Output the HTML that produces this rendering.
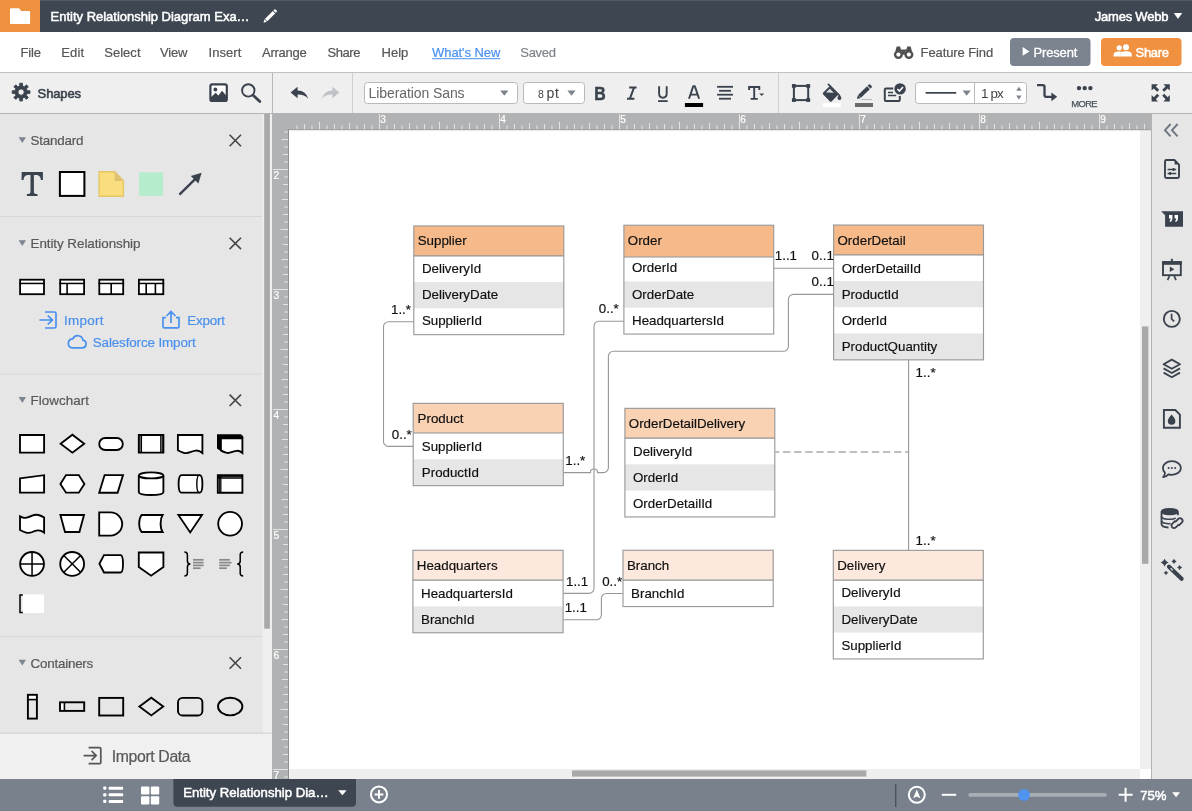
<!DOCTYPE html>
<html lang="en"><head><meta charset="utf-8"><title>Entity Relationship Diagram Example: Lucidchart</title>
<style>
html,body{margin:0;padding:0;}
body{width:1192px;height:811px;overflow:hidden;position:relative;background:#fff;
 font-family:"Liberation Sans",sans-serif;}
.r{position:absolute;overflow:hidden;}
.r svg{display:block;position:absolute;left:0;top:0;}
.r{will-change:transform;}
svg text{font-family:"Liberation Sans",sans-serif;}
</style></head>
<body>
<div id="canvas" class="r" style="left:272px;top:114px;width:880px;height:665px;"><svg width="880" height="665" viewBox="272 114 880 665"><rect x="272" y="114" width="880" height="665" fill="#fff"/><rect x="1140" y="130" width="11" height="639" fill="#efefef"/><rect x="289" y="769" width="851" height="10" fill="#efefef"/><rect x="1142" y="326.4" width="6.4" height="237.4" fill="#a9a9a9"/><rect x="572" y="770.4" width="294.4" height="6.2" fill="#a9a9a9"/><rect x="272" y="114" width="879" height="15.2" fill="#b1b2b4"/><rect x="272" y="114" width="16" height="665" fill="#b1b2b4"/><rect x="288" y="129.2" width="863" height="1" fill="#8e8f91"/><rect x="288" y="129.2" width="1" height="649.8" fill="#8e8f91"/><path d="M297.00 125.40V129.2M304.50 124.20V129.2M312.00 125.40V129.2M319.50 121.80V129.2M327.00 125.40V129.2M334.50 124.20V129.2M342.00 125.40V129.2M349.50 123.00V129.2M357.00 125.40V129.2M364.50 124.20V129.2M372.00 125.40V129.2M379.50 114.00V129.2M387.00 125.40V129.2M394.50 124.20V129.2M402.00 125.40V129.2M409.50 123.00V129.2M417.00 125.40V129.2M424.50 124.20V129.2M432.00 125.40V129.2M439.50 121.80V129.2M447.00 125.40V129.2M454.50 124.20V129.2M462.00 125.40V129.2M469.50 123.00V129.2M477.00 125.40V129.2M484.50 124.20V129.2M492.00 125.40V129.2M499.50 114.00V129.2M507.00 125.40V129.2M514.50 124.20V129.2M522.00 125.40V129.2M529.50 123.00V129.2M537.00 125.40V129.2M544.50 124.20V129.2M552.00 125.40V129.2M559.50 121.80V129.2M567.00 125.40V129.2M574.50 124.20V129.2M582.00 125.40V129.2M589.50 123.00V129.2M597.00 125.40V129.2M604.50 124.20V129.2M612.00 125.40V129.2M619.50 114.00V129.2M627.00 125.40V129.2M634.50 124.20V129.2M642.00 125.40V129.2M649.50 123.00V129.2M657.00 125.40V129.2M664.50 124.20V129.2M672.00 125.40V129.2M679.50 121.80V129.2M687.00 125.40V129.2M694.50 124.20V129.2M702.00 125.40V129.2M709.50 123.00V129.2M717.00 125.40V129.2M724.50 124.20V129.2M732.00 125.40V129.2M739.50 114.00V129.2M747.00 125.40V129.2M754.50 124.20V129.2M762.00 125.40V129.2M769.50 123.00V129.2M777.00 125.40V129.2M784.50 124.20V129.2M792.00 125.40V129.2M799.50 121.80V129.2M807.00 125.40V129.2M814.50 124.20V129.2M822.00 125.40V129.2M829.50 123.00V129.2M837.00 125.40V129.2M844.50 124.20V129.2M852.00 125.40V129.2M859.50 114.00V129.2M867.00 125.40V129.2M874.50 124.20V129.2M882.00 125.40V129.2M889.50 123.00V129.2M897.00 125.40V129.2M904.50 124.20V129.2M912.00 125.40V129.2M919.50 121.80V129.2M927.00 125.40V129.2M934.50 124.20V129.2M942.00 125.40V129.2M949.50 123.00V129.2M957.00 125.40V129.2M964.50 124.20V129.2M972.00 125.40V129.2M979.50 114.00V129.2M987.00 125.40V129.2M994.50 124.20V129.2M1002.00 125.40V129.2M1009.50 123.00V129.2M1017.00 125.40V129.2M1024.50 124.20V129.2M1032.00 125.40V129.2M1039.50 121.80V129.2M1047.00 125.40V129.2M1054.50 124.20V129.2M1062.00 125.40V129.2M1069.50 123.00V129.2M1077.00 125.40V129.2M1084.50 124.20V129.2M1092.00 125.40V129.2M1099.50 114.00V129.2M1107.00 125.40V129.2M1114.50 124.20V129.2M1122.00 125.40V129.2M1129.50 123.00V129.2M1137.00 125.40V129.2M1144.50 124.20V129.2" stroke="#e4e4e4" stroke-width="1" fill="none"/><text x="380.3" y="122.9" font-size="10.2" fill="#fff" stroke="#fff" stroke-width="0.2">3</text><text x="500.3" y="122.9" font-size="10.2" fill="#fff" stroke="#fff" stroke-width="0.2">4</text><text x="620.3" y="122.9" font-size="10.2" fill="#fff" stroke="#fff" stroke-width="0.2">5</text><text x="740.3" y="122.9" font-size="10.2" fill="#fff" stroke="#fff" stroke-width="0.2">6</text><text x="860.3" y="122.9" font-size="10.2" fill="#fff" stroke="#fff" stroke-width="0.2">7</text><text x="980.3" y="122.9" font-size="10.2" fill="#fff" stroke="#fff" stroke-width="0.2">8</text><text x="1100.3" y="122.9" font-size="10.2" fill="#fff" stroke="#fff" stroke-width="0.2">9</text><path d="M284.20 132.00H288M281.80 139.50H288M284.20 147.00H288M283.00 154.50H288M284.20 162.00H288M273.00 169.50H288M284.20 177.00H288M283.00 184.50H288M284.20 192.00H288M281.80 199.50H288M284.20 207.00H288M283.00 214.50H288M284.20 222.00H288M280.60 229.50H288M284.20 237.00H288M283.00 244.50H288M284.20 252.00H288M281.80 259.50H288M284.20 267.00H288M283.00 274.50H288M284.20 282.00H288M273.00 289.50H288M284.20 297.00H288M283.00 304.50H288M284.20 312.00H288M281.80 319.50H288M284.20 327.00H288M283.00 334.50H288M284.20 342.00H288M280.60 349.50H288M284.20 357.00H288M283.00 364.50H288M284.20 372.00H288M281.80 379.50H288M284.20 387.00H288M283.00 394.50H288M284.20 402.00H288M273.00 409.50H288M284.20 417.00H288M283.00 424.50H288M284.20 432.00H288M281.80 439.50H288M284.20 447.00H288M283.00 454.50H288M284.20 462.00H288M280.60 469.50H288M284.20 477.00H288M283.00 484.50H288M284.20 492.00H288M281.80 499.50H288M284.20 507.00H288M283.00 514.50H288M284.20 522.00H288M273.00 529.50H288M284.20 537.00H288M283.00 544.50H288M284.20 552.00H288M281.80 559.50H288M284.20 567.00H288M283.00 574.50H288M284.20 582.00H288M280.60 589.50H288M284.20 597.00H288M283.00 604.50H288M284.20 612.00H288M281.80 619.50H288M284.20 627.00H288M283.00 634.50H288M284.20 642.00H288M273.00 649.50H288M284.20 657.00H288M283.00 664.50H288M284.20 672.00H288M281.80 679.50H288M284.20 687.00H288M283.00 694.50H288M284.20 702.00H288M280.60 709.50H288M284.20 717.00H288M283.00 724.50H288M284.20 732.00H288M281.80 739.50H288M284.20 747.00H288M283.00 754.50H288M284.20 762.00H288M273.00 769.50H288M284.20 777.00H288" stroke="#e4e4e4" stroke-width="1" fill="none"/><text x="273.4" y="178.9" font-size="10.2" fill="#fff" stroke="#fff" stroke-width="0.2">2</text><text x="273.4" y="298.9" font-size="10.2" fill="#fff" stroke="#fff" stroke-width="0.2">3</text><text x="273.4" y="418.9" font-size="10.2" fill="#fff" stroke="#fff" stroke-width="0.2">4</text><text x="273.4" y="538.9" font-size="10.2" fill="#fff" stroke="#fff" stroke-width="0.2">5</text><text x="273.4" y="658.9" font-size="10.2" fill="#fff" stroke="#fff" stroke-width="0.2">6</text><text x="273.4" y="778.9" font-size="10.2" fill="#fff" stroke="#fff" stroke-width="0.2">7</text><path d="M414.3 321.7 L388.5 321.7 A5 5 0 0 0 383.5 326.7 L383.5 441.4 A5 5 0 0 0 388.5 446.4 L413.7 446.4" fill="none" stroke="#979797" stroke-width="1.1" /><path d="M624.4 321.2 L599 321.2 A5 5 0 0 0 594 326.2 L594 588.4 A5 5 0 0 1 589 593.4 L563.4 593.4" fill="none" stroke="#979797" stroke-width="1.1" /><path d="M774 268.2 H834.1" fill="none" stroke="#979797" stroke-width="1.1" /><path d="M834.1 294.4 L793.4 294.4 A5 5 0 0 0 788.4 299.4 L788.4 346.3 A5 5 0 0 1 783.4 351.3 L613.4 351.3 A5 5 0 0 0 608.4 356.3 L608.4 467.6 A5 5 0 0 1 603.4 472.6 L597.6 472.6 A3.6 3.6 0 0 0 590.4 472.6 L563.6 472.6" fill="none" stroke="#979797" stroke-width="1.1" /><path d="M908.6 360 V550.7" fill="none" stroke="#979797" stroke-width="1.1" /><path d="M775.4 451.9 H908.6" fill="none" stroke="#ababab" stroke-width="1.5" stroke-dasharray="7.4 3.7" stroke-dashoffset="3.5"/><path d="M563.4 619.8 L596.4 619.8 A5 5 0 0 0 601.4 614.8 L601.4 598.5 A5 5 0 0 1 606.4 593.5 L623.5 593.5" fill="none" stroke="#979797" stroke-width="1.1" /><rect x="413.8" y="225.95" width="150.0" height="108.70" fill="#fff"/><rect x="413.8" y="225.95" width="150.0" height="29.9" fill="#f5b98a"/><rect x="413.8" y="282.05" width="150.0" height="26.2" fill="#e6e6e6"/><rect x="413.8" y="225.95" width="150.0" height="108.70" fill="none" stroke="#9a9a9a" stroke-width="1.15"/><path d="M413.8 255.85h150.0" stroke="#939393" stroke-width="1.1"/><text x="417.7" y="245.3" font-size="13.33" fill="#111" stroke="#111" stroke-width="0.18">Supplier</text><text x="421.9" y="272.8" font-size="13.33" fill="#111" stroke="#111" stroke-width="0.18">DeliveryId</text><text x="421.9" y="299.0" font-size="13.33" fill="#111" stroke="#111" stroke-width="0.18">DeliveryDate</text><text x="421.9" y="325.2" font-size="13.33" fill="#111" stroke="#111" stroke-width="0.18">SupplierId</text><rect x="623.9" y="225.25" width="149.79999999999998" height="108.80" fill="#fff"/><rect x="623.9" y="225.25" width="149.79999999999998" height="31.7" fill="#f5b98a"/><rect x="623.9" y="281.45" width="149.79999999999998" height="26.2" fill="#e6e6e6"/><rect x="623.9" y="225.25" width="149.79999999999998" height="108.80" fill="none" stroke="#9a9a9a" stroke-width="1.15"/><path d="M623.9 256.95h149.79999999999998" stroke="#939393" stroke-width="1.1"/><text x="627.8" y="245.3" font-size="13.33" fill="#111" stroke="#111" stroke-width="0.18">Order</text><text x="632.0" y="272.4" font-size="13.33" fill="#111" stroke="#111" stroke-width="0.18">OrderId</text><text x="632.0" y="298.6" font-size="13.33" fill="#111" stroke="#111" stroke-width="0.18">OrderDate</text><text x="632.0" y="324.8" font-size="13.33" fill="#111" stroke="#111" stroke-width="0.18">HeadquartersId</text><rect x="833.6" y="225.05" width="149.89999999999998" height="134.80" fill="#fff"/><rect x="833.6" y="225.05" width="149.89999999999998" height="29.8" fill="#f5b98a"/><rect x="833.6" y="281.05" width="149.89999999999998" height="26.2" fill="#e6e6e6"/><rect x="833.6" y="333.45" width="149.89999999999998" height="26.2" fill="#e6e6e6"/><rect x="833.6" y="225.05" width="149.89999999999998" height="134.80" fill="none" stroke="#9a9a9a" stroke-width="1.15"/><path d="M833.6 254.85h149.89999999999998" stroke="#939393" stroke-width="1.1"/><text x="837.5" y="244.6" font-size="13.33" fill="#111" stroke="#111" stroke-width="0.18">OrderDetail</text><text x="841.7" y="272.5" font-size="13.33" fill="#111" stroke="#111" stroke-width="0.18">OrderDetailId</text><text x="841.7" y="298.7" font-size="13.33" fill="#111" stroke="#111" stroke-width="0.18">ProductId</text><text x="841.7" y="324.9" font-size="13.33" fill="#111" stroke="#111" stroke-width="0.18">OrderId</text><text x="841.7" y="351.1" font-size="13.33" fill="#111" stroke="#111" stroke-width="0.18">ProductQuantity</text><rect x="413.2" y="403.35" width="150.1" height="82.30" fill="#fff"/><rect x="413.2" y="403.35" width="150.1" height="29.7" fill="#f9d1b3"/><rect x="413.2" y="459.25" width="150.1" height="26.2" fill="#e6e6e6"/><rect x="413.2" y="403.35" width="150.1" height="82.30" fill="none" stroke="#9a9a9a" stroke-width="1.15"/><path d="M413.2 433.05h150.1" stroke="#939393" stroke-width="1.1"/><text x="417.6" y="422.8" font-size="13.33" fill="#111" stroke="#111" stroke-width="0.18">Product</text><text x="421.8" y="450.5" font-size="13.33" fill="#111" stroke="#111" stroke-width="0.18">SupplierId</text><text x="421.8" y="476.7" font-size="13.33" fill="#111" stroke="#111" stroke-width="0.18">ProductId</text><rect x="624.9" y="408.35" width="149.89999999999998" height="108.60" fill="#fff"/><rect x="624.9" y="408.35" width="149.89999999999998" height="29.8" fill="#f9d1b3"/><rect x="624.9" y="464.35" width="149.89999999999998" height="26.2" fill="#e6e6e6"/><rect x="624.9" y="408.35" width="149.89999999999998" height="108.60" fill="none" stroke="#9a9a9a" stroke-width="1.15"/><path d="M624.9 438.15h149.89999999999998" stroke="#939393" stroke-width="1.1"/><text x="628.8" y="427.8" font-size="13.33" fill="#111" stroke="#111" stroke-width="0.18">OrderDetailDelivery</text><text x="633.0" y="455.7" font-size="13.33" fill="#111" stroke="#111" stroke-width="0.18">DeliveryId</text><text x="633.0" y="481.9" font-size="13.33" fill="#111" stroke="#111" stroke-width="0.18">OrderId</text><text x="633.0" y="508.1" font-size="13.33" fill="#111" stroke="#111" stroke-width="0.18">OrderDetailId</text><rect x="412.9" y="550.25" width="150.2" height="82.50" fill="#fff"/><rect x="412.9" y="550.25" width="150.2" height="29.9" fill="#fce8dc"/><rect x="412.9" y="606.35" width="150.2" height="26.2" fill="#e6e6e6"/><rect x="412.9" y="550.25" width="150.2" height="82.50" fill="none" stroke="#9a9a9a" stroke-width="1.15"/><path d="M412.9 580.15h150.2" stroke="#939393" stroke-width="1.1"/><text x="416.8" y="570.3" font-size="13.33" fill="#111" stroke="#111" stroke-width="0.18">Headquarters</text><text x="421.0" y="597.6" font-size="13.33" fill="#111" stroke="#111" stroke-width="0.18">HeadquartersId</text><text x="421.0" y="623.8" font-size="13.33" fill="#111" stroke="#111" stroke-width="0.18">BranchId</text><rect x="623.0" y="550.25" width="150.2" height="56.30" fill="#fff"/><rect x="623.0" y="550.25" width="150.2" height="29.9" fill="#fce8dc"/><rect x="623.0" y="550.25" width="150.2" height="56.30" fill="none" stroke="#9a9a9a" stroke-width="1.15"/><path d="M623.0 580.15h150.2" stroke="#939393" stroke-width="1.1"/><text x="626.9" y="570.3" font-size="13.33" fill="#111" stroke="#111" stroke-width="0.18">Branch</text><text x="631.1" y="597.6" font-size="13.33" fill="#111" stroke="#111" stroke-width="0.18">BranchId</text><rect x="833.3" y="550.35" width="150.0" height="108.60" fill="#fff"/><rect x="833.3" y="550.35" width="150.0" height="29.8" fill="#fce8dc"/><rect x="833.3" y="606.35" width="150.0" height="26.2" fill="#e6e6e6"/><rect x="833.3" y="550.35" width="150.0" height="108.60" fill="none" stroke="#9a9a9a" stroke-width="1.15"/><path d="M833.3 580.15h150.0" stroke="#939393" stroke-width="1.1"/><text x="837.2" y="569.7" font-size="13.33" fill="#111" stroke="#111" stroke-width="0.18">Delivery</text><text x="841.4" y="597.3" font-size="13.33" fill="#111" stroke="#111" stroke-width="0.18">DeliveryId</text><text x="841.4" y="623.5" font-size="13.33" fill="#111" stroke="#111" stroke-width="0.18">DeliveryDate</text><text x="841.4" y="649.7" font-size="13.33" fill="#111" stroke="#111" stroke-width="0.18">SupplierId</text><text x="391" y="313.7" font-size="13.33" fill="#111" stroke="#111" stroke-width="0.18">1..*</text><text x="391.8" y="438.6" font-size="13.33" fill="#111" stroke="#111" stroke-width="0.18">0..*</text><text x="598.8" y="313.3" font-size="13.33" fill="#111" stroke="#111" stroke-width="0.18">0..*</text><text x="565.3" y="464.9" font-size="13.33" fill="#111" stroke="#111" stroke-width="0.18">1..*</text><text x="774.8" y="260" font-size="13.33" fill="#111" stroke="#111" stroke-width="0.18">1..1</text><text x="811.6" y="260" font-size="13.33" fill="#111" stroke="#111" stroke-width="0.18">0..1</text><text x="811.6" y="286.2" font-size="13.33" fill="#111" stroke="#111" stroke-width="0.18">0..1</text><text x="915.6" y="376.8" font-size="13.33" fill="#111" stroke="#111" stroke-width="0.18">1..*</text><text x="915.6" y="545" font-size="13.33" fill="#111" stroke="#111" stroke-width="0.18">1..*</text><text x="566" y="585.6" font-size="13.33" fill="#111" stroke="#111" stroke-width="0.18">1..1</text><text x="564.7" y="611.6" font-size="13.33" fill="#111" stroke="#111" stroke-width="0.18">1..1</text><text x="602.2" y="585.6" font-size="13.33" fill="#111" stroke="#111" stroke-width="0.18">0..*</text></svg></div>
<div id="left" class="r" style="left:0px;top:114px;width:272px;height:665px;"><svg width="272" height="665" viewBox="0 114 272 665"><rect x="0" y="114" width="272" height="665" fill="#e6e6e6"/><rect x="262.6" y="114" width="9.4" height="665" fill="#efefef"/><rect x="262" y="114" width="1" height="665" fill="#eaeaea"/><rect x="264.2" y="114" width="5.7" height="514.7" fill="#a9a9a9"/><rect x="0" y="216" width="262" height="1" fill="#d6d6d6"/><rect x="0" y="373.5" width="262" height="1" fill="#d6d6d6"/><rect x="0" y="636" width="262" height="1" fill="#d6d6d6"/><path d="M18.6 137.29999999999998 h7.4 l-3.7 5.8 z" fill="#7d8591"/><text x="30.5" y="145.2" font-size="13.4" fill="#585858" stroke="#585858" stroke-width="0.2" textLength="53" lengthAdjust="spacing">Standard</text><path d="M229.6 134.79999999999998 l11.4 11.4 M241 134.79999999999998 l-11.4 11.4" stroke="#444" stroke-width="1.6" fill="none"/><path d="M18.6 240.2 h7.4 l-3.7 5.8 z" fill="#7d8591"/><text x="30.5" y="248.1" font-size="13.4" fill="#585858" stroke="#585858" stroke-width="0.2" textLength="110" lengthAdjust="spacing">Entity Relationship</text><path d="M229.6 237.7 l11.4 11.4 M241 237.7 l-11.4 11.4" stroke="#444" stroke-width="1.6" fill="none"/><path d="M18.6 397.1 h7.4 l-3.7 5.8 z" fill="#7d8591"/><text x="30.5" y="405" font-size="13.4" fill="#585858" stroke="#585858" stroke-width="0.2" textLength="58.4" lengthAdjust="spacing">Flowchart</text><path d="M229.6 394.59999999999997 l11.4 11.4 M241 394.59999999999997 l-11.4 11.4" stroke="#444" stroke-width="1.6" fill="none"/><path d="M18.6 659.8000000000001 h7.4 l-3.7 5.8 z" fill="#7d8591"/><text x="30.5" y="667.7" font-size="13.4" fill="#585858" stroke="#585858" stroke-width="0.2" textLength="62.8" lengthAdjust="spacing">Containers</text><path d="M229.6 657.3000000000001 l11.4 11.4 M241 657.3000000000001 l-11.4 11.4" stroke="#444" stroke-width="1.6" fill="none"/><path d="M21.7 172 h21.2 v8 h-2 q-0.4 -4.6 -4 -4.9 h-3 v17.2 q0 1.6 2.2 1.7 l1.4 0.1 v1.8 h-10.6 v-1.8 l1.4 -0.1 q2.2 -0.1 2.2 -1.7 v-17.2 h-3 q-3.6 0.3 -4 4.9 h-2 z" fill="#3a424d"/><rect x="59.9" y="172" width="24.5" height="23.9" fill="#fff" stroke="#000" stroke-width="2"/><path d="M99.1 171.7 h15.6 l8.7 9.2 v15.3 h-24.3 z" fill="#f9dd7f" stroke="#e5c566" stroke-width="1.4"/><path d="M114.7 171.7 v9.2 h8.7 z" fill="#ddc272"/><rect x="139.1" y="172.3" width="24" height="23.6" fill="#b5edcc"/><path d="M179.4 194.7 L195.6 178.6" stroke="#3a424d" stroke-width="2.4" fill="none"/><path d="M201.6 172.7 l-3.2 10.8 l-7.6 -7.6 z" fill="#3a424d"/><rect x="20.099999999999998" y="279.7" width="23.9" height="14.5" fill="#fff" stroke="#000" stroke-width="1.8"/><rect x="19.2" y="282.7" width="25.7" height="1.5" fill="#000"/><rect x="60.199999999999996" y="279.7" width="23.900000000000002" height="14.5" fill="#fff" stroke="#000" stroke-width="1.8"/><rect x="59.3" y="282.7" width="25.700000000000003" height="1.5" fill="#000"/><rect x="66.3" y="283.4" width="1.6" height="11" fill="#000"/><rect x="99.30000000000001" y="279.7" width="23.899999999999988" height="14.5" fill="#fff" stroke="#000" stroke-width="1.8"/><rect x="98.4" y="282.7" width="25.69999999999999" height="1.5" fill="#000"/><rect x="110.4" y="283.4" width="1.6" height="11" fill="#000"/><rect x="138.9" y="279.7" width="24.399999999999988" height="14.5" fill="#fff" stroke="#000" stroke-width="1.8"/><rect x="138" y="282.7" width="26.19999999999999" height="1.5" fill="#000"/><rect x="145.39999999999998" y="283.4" width="1.6" height="11" fill="#000"/><rect x="154.6" y="283.4" width="1.6" height="11" fill="#000"/><path d="M39.4 320 h12.6 M47.8 315.6 l4.6 4.4 l-4.6 4.4 M45 312 h9.6 q1.4 0 1.4 1.4 v13.2 q0 1.4 -1.4 1.4 h-9.6" fill="none" stroke="#4a90ee" stroke-width="1.7"/><text x="64" y="325.2" font-size="13.4" fill="#4a90ee" stroke="#4a90ee" stroke-width="0.2" textLength="39.6" lengthAdjust="spacing">Import</text><path d="M171 323 v-11.4 M166.6 316 l4.4 -4.6 l4.4 4.6 M166 317.6 h-3 v8.8 q0 1.4 1.4 1.4 h13.2 q1.4 0 1.4 -1.4 v-8.8 h-3" fill="none" stroke="#4a90ee" stroke-width="1.7"/><text x="187.3" y="325.2" font-size="13.4" fill="#4a90ee" stroke="#4a90ee" stroke-width="0.2" textLength="37.6" lengthAdjust="spacing">Export</text><path d="M72 347.9 h10.4 a3.9 3.9 0 0 0 0.6 -7.7 a5.4 5.4 0 0 0 -10.2 -1.4 a4.6 4.6 0 0 0 -0.8 9.1 z" fill="none" stroke="#4a90ee" stroke-width="1.7"/><text x="92.8" y="347.2" font-size="13.4" fill="#4a90ee" stroke="#4a90ee" stroke-width="0.2" textLength="103" lengthAdjust="spacing">Salesforce Import</text><path d="M20 435 h24.1 v17.6 h-24.1 z" fill="#fff" stroke="#000" stroke-width="1.85" stroke-linejoin="miter" /><path d="M60.6 443.7 l11.8 -9 l11.8 9 l-11.8 9 z" fill="#fff" stroke="#000" stroke-width="1.85" stroke-linejoin="miter" /><rect x="99.2" y="438" width="23.6" height="12" rx="6" fill="#fff" stroke="#000" stroke-width="1.85"/><path d="M138.8 435 h24.6 v17.6 h-24.6 z" fill="#fff" stroke="#000" stroke-width="1.85" stroke-linejoin="miter" /><path d="M141.4 435 v17.6 M160.8 435 v17.6" stroke="#000" stroke-width="1.3"/><path d="M140 435 v17.6 M162.2 435 v17.6" stroke="#000" stroke-width="1"/><path d="M177.9 435 h24.5 v18 q-3.4 -2.8 -6.6 -2.4 q-3 0.4 -5.6 1.6 q-3.4 1.4 -6.4 0.6 q-3 -0.8 -5.9 -2.6 z" fill="#fff" stroke="#000" stroke-width="1.85" stroke-linejoin="miter" /><path d="M217 434.2 h24 l2.3 2.4 v1.6 h-22.4 v13 l-3.9 -2.6 z" fill="#000"/><path d="M220.9 438.2 h21.5 v14.8 q-3 -2.6 -5.8 -2.2 q-2.6 0.4 -5 1.4 q-3 1.2 -5.6 0.5 q-2.6 -0.7 -5.1 -2.3 z" fill="#fff" stroke="#000" stroke-width="1.85" stroke-linejoin="miter" /><path d="M20 478.4 l24.1 -3.2 v17.4 h-24.1 z" fill="#fff" stroke="#000" stroke-width="1.85" stroke-linejoin="miter" /><path d="M60.4 483.9 l5.6 -8.8 h12.8 l5.6 8.8 l-5.6 8.8 h-12.8 z" fill="#fff" stroke="#000" stroke-width="1.85" stroke-linejoin="miter" /><path d="M104.6 475.1 h18.4 l-5.4 17.6 h-18.4 z" fill="#fff" stroke="#000" stroke-width="1.85" stroke-linejoin="miter" /><path d="M138.8 475.4 v16.6 q0 3 12.3 3 q12.3 0 12.3 -3 v-16.6" fill="#fff" stroke="#000" stroke-width="1.85" stroke-linejoin="miter" /><path d="M138.8 475.4 a12.3 3 0 0 0 24.6 0 a12.3 3 0 0 0 -24.6 0 z" fill="#fff" stroke="#000" stroke-width="1.85" stroke-linejoin="miter" /><path d="M181.6 475.1 h18 q2.8 0 2.8 8.8 q0 8.8 -2.8 8.8 h-18 q-3 0 -3 -8.8 q0 -8.8 3 -8.8 z" fill="#fff" stroke="#000" stroke-width="1.85" stroke-linejoin="miter" /><path d="M199.6 475.1 q-2.8 0 -2.8 8.8 q0 8.8 2.8 8.8" fill="none" stroke="#000" stroke-width="1.4"/><path d="M217.8 475.1 h24.6 v17.6 h-24.6 z" fill="#fff" stroke="#000" stroke-width="1.85" stroke-linejoin="miter" /><path d="M220.8 475.1 v17.6 M217.8 478 h24.6" stroke="#000" stroke-width="1.3"/><path d="M219.4 475.1 v17.6 M217.8 476.6 h24.6" stroke="#000" stroke-width="1"/><path d="M20 516.4 q3.4 2 6.6 1.2 q3 -0.8 5.6 -2 q3.2 -1.4 6.2 -0.6 q3 0.8 5.7 2.6 v15 q-3.2 -2.4 -6.2 -2.2 q-2.8 0.2 -5.6 1.6 q-3.2 1.4 -6.2 0.6 q-3 -0.8 -6.1 -2.6 z" fill="#fff" stroke="#000" stroke-width="1.85" stroke-linejoin="miter" /><path d="M60.4 515 h23.6 l-4.6 17 h-14.4 z" fill="#fff" stroke="#000" stroke-width="1.85" stroke-linejoin="miter" /><path d="M99.2 512.4 h11.4 a11.6 11.6 0 0 1 0 23.2 h-11.4 z" fill="#fff" stroke="#000" stroke-width="1.85" stroke-linejoin="miter" /><path d="M141.6 515 h21 q-2 3 -2 8.6 q0 5.6 2 8.4 h-21 q-2.4 -2.8 -2.4 -8.4 q0 -5.6 2.4 -8.6 z" fill="#fff" stroke="#000" stroke-width="1.85" stroke-linejoin="miter" /><path d="M178.4 515 h23.6 l-11.8 17.4 z" fill="#fff" stroke="#000" stroke-width="1.85" stroke-linejoin="miter" /><circle cx="230.1" cy="523.7" r="11.9" fill="#fff" stroke="#000" stroke-width="1.85"/><circle cx="32.05" cy="563.9" r="11.9" fill="#fff" stroke="#000" stroke-width="1.85"/><path d="M20.2 563.9 h23.8 M32.05 552 v23.8" stroke="#000" stroke-width="1.5"/><circle cx="72.15" cy="563.9" r="11.9" fill="#fff" stroke="#000" stroke-width="1.85"/><path d="M63.8 555.5 l16.8 16.8 M80.6 555.5 l-16.8 16.8" stroke="#000" stroke-width="1.5"/><path d="M104 555.1 h16.6 q2.4 0 2.4 8.7 q0 8.7 -2.4 8.7 h-16.6 l-4.6 -8.7 z" fill="#fff" stroke="#000" stroke-width="1.85" stroke-linejoin="miter" /><path d="M138.8 552.5 h24.6 v14.6 l-12.3 8.6 l-12.3 -8.6 z" fill="#fff" stroke="#000" stroke-width="1.85" stroke-linejoin="miter" /><path d="M184.4 552 q3 0 3 3 v6 q0 3 3 3 q-3 0 -3 3 v6 q0 3 -3 3" fill="none" stroke="#000" stroke-width="1.5"/><rect x="193" y="558.9499999999999" width="10.6" height="1.7" fill="#888"/><rect x="193" y="561.75" width="10.6" height="1.7" fill="#888"/><rect x="193" y="564.55" width="10.6" height="1.7" fill="#888"/><rect x="193" y="567.35" width="7.6" height="1.7" fill="#888"/><rect x="219.2" y="558.9499999999999" width="10.6" height="1.7" fill="#888"/><rect x="219.2" y="561.75" width="12.4" height="1.7" fill="#888"/><rect x="219.2" y="564.55" width="10.6" height="1.7" fill="#888"/><rect x="219.2" y="567.35" width="7.6" height="1.7" fill="#888"/><path d="M243.2 552 q-3 0 -3 3 v6 q0 3 -3 3 q3 0 3 3 v6 q0 3 3 3" fill="none" stroke="#000" stroke-width="1.5"/><rect x="22.6" y="594.4" width="21.4" height="18.6" fill="#fff"/><path d="M22.8 595 h-2.8 v17.4 h2.8" fill="none" stroke="#000" stroke-width="1.5"/><rect x="27.9" y="694.8" width="9" height="4.6" fill="#fff"/><rect x="27.9" y="694.8" width="9" height="23.8" fill="none" stroke="#000" stroke-width="1.9"/><path d="M27.9 699.6 h9" stroke="#000" stroke-width="1.6"/><rect x="60" y="702.3" width="4.2" height="8.6" fill="#fff"/><rect x="60" y="702.3" width="24.2" height="8.6" fill="none" stroke="#000" stroke-width="1.9"/><path d="M64.4 702.3 v8.6" stroke="#000" stroke-width="1.6"/><rect x="99.2" y="697.9" width="24" height="17.6" fill="none" stroke="#000" stroke-width="1.9"/><path d="M139.4 706.6 l11.9 -8.8 l11.9 8.8 l-11.9 8.8 z" fill="none" stroke="#000" stroke-width="1.9"/><rect x="178" y="697.9" width="24.4" height="17.6" rx="4.6" fill="none" stroke="#000" stroke-width="1.9"/><ellipse cx="230.2" cy="706.6" rx="12.2" ry="8.8" fill="none" stroke="#000" stroke-width="1.9"/><rect x="0" y="733" width="272" height="46" fill="#f0f0f0"/><rect x="0" y="732.6" width="272" height="1" fill="#cdcdcd"/><path d="M83.6 755.6 h12.4 M91.6 751 l4.6 4.6 l-4.6 4.6 M88.6 747.6 h11 q1.2 0 1.2 1.2 v13.6 q0 1.2 -1.2 1.2 h-11" fill="none" stroke="#555" stroke-width="1.7"/><text x="111.8" y="761.7" font-size="15.8" fill="#585858" stroke="#585858" stroke-width="0.2" textLength="78.8" lengthAdjust="spacing">Import Data</text></svg></div>
<div id="right" class="r" style="left:1151px;top:114px;width:41px;height:665px;"><svg width="41" height="665" viewBox="1151 114 41 665"><rect x="1151" y="114" width="41" height="665" fill="#e6e6e6"/><rect x="1151" y="114" width="1" height="665" fill="#b4b4b4"/><path d="M1170.6 124 l-5.6 6.2 l5.6 6.2 M1177.6 124 l-5.6 6.2 l5.6 6.2" fill="none" stroke="#6f7883" stroke-width="2"/><path d="M1166.4 160 h8 l4.6 4.6 v12 q0 1.4 -1.4 1.4 h-11.2 q-1.4 0 -1.4 -1.4 v-15.2 q0 -1.4 1.4 -1.4 z" fill="none" stroke="#3a424d" stroke-width="1.9" stroke-linejoin="round"/><path d="M1174.6 160 v4.4 h4.4 z" fill="#3a424d"/><path d="M1167.6 169.5 h8.6 M1167.6 173.5 h8.6" stroke="#3a424d" stroke-width="1.3"/><rect x="1172.6" y="168" width="1.8" height="3" fill="#3a424d"/><rect x="1169.2" y="172" width="1.8" height="3" fill="#3a424d"/><path d="M1161.2 211.2 h21.8 v15.6 h-17.9 v-11.6 z" fill="#3a424d"/><path d="M1169 215 h3.4 v3.6 q0 2.4 -2.2 3.4 l-0.7 -1 q1.1 -0.8 1.2 -2.4 h-1.7 z M1174.6 215 h3.4 v3.6 q0 2.4 -2.2 3.4 l-0.7 -1 q1.1 -0.8 1.2 -2.4 h-1.7 z" fill="#fff"/><rect x="1163" y="262.2" width="17.8" height="13" fill="none" stroke="#3a424d" stroke-width="1.9"/><rect x="1162.1" y="261.2" width="19.7" height="3.6" fill="#3a424d"/><rect x="1170.9" y="258.8" width="1.9" height="3" fill="#3a424d"/><path d="M1169.8 266.6 l4.6 2.7 l-4.6 2.7 z" fill="#3a424d"/><path d="M1169.4 276 l-1.8 4.2 M1174.2 276 l1.8 4.2" stroke="#3a424d" stroke-width="1.7"/><circle cx="1171.8" cy="318.9" r="8" fill="none" stroke="#3a424d" stroke-width="1.9"/><path d="M1171.6 313.8 v5.2 l2.6 2.4" fill="none" stroke="#3a424d" stroke-width="1.7"/><path d="M1171.8 359.6 l8.2 4.6 l-8.2 4.6 l-8.2 -4.6 z" fill="none" stroke="#3a424d" stroke-width="1.8" stroke-linejoin="round"/><path d="M1163.6 368.4 l8.2 4.6 l8.2 -4.6 M1163.6 372.6 l8.2 4.6 l8.2 -4.6" fill="none" stroke="#3a424d" stroke-width="1.8" stroke-linejoin="round"/><path d="M1163.9 410 h11.4 l4.6 4.6 v13.2 h-16 z" fill="none" stroke="#3a424d" stroke-width="1.9"/><path d="M1171.6 414.4 q3.8 4.4 3.8 6.6 a3.8 3.8 0 0 1 -7.6 0 q0 -2.2 3.8 -6.6 z" fill="#3a424d"/><path d="M1171.9 461.2 c5.2 0 9 3 9 6.8 c0 3.8 -3.8 6.8 -9 6.8 c-1.2 0 -2.4 -0.2 -3.4 -0.5 q-2.2 2.4 -5.4 2.8 q1.8 -1.8 1.8 -4.4 q-2 -2 -2 -4.7 c0 -3.8 3.8 -6.8 9 -6.8 z" fill="none" stroke="#3a424d" stroke-width="1.8" stroke-linejoin="round"/><circle cx="1168.6" cy="468" r="1" fill="#3a424d"/><circle cx="1171.9" cy="468" r="1" fill="#3a424d"/><circle cx="1175.2" cy="468" r="1" fill="#3a424d"/><ellipse cx="1169.7" cy="511.6" rx="8.2" ry="2.9" fill="#3a424d" stroke="#3a424d" stroke-width="1.4"/><path d="M1161.5 511.6 v12.4 c0 2.6 4 3.4 7 3.5 M1177.9 511.6 v3.6" fill="none" stroke="#3a424d" stroke-width="1.8"/><path d="M1161.5 516.4 c0 3.4 12 3.6 14.2 1.6 M1161.5 520.8 c0 2.6 6 3.2 9 2.8" fill="none" stroke="#3a424d" stroke-width="1.6"/><g fill="none" stroke="#3a424d" stroke-width="1.8" stroke-linecap="round"><path d="M1175.6 521.6 l2.6 -2.6 a2.5 2.5 0 0 1 3.6 3.6 l-2.6 2.6"/><path d="M1177.8 523.4 l-2.6 2.6 a2.5 2.5 0 0 1 -3.6 -3.6 l2.6 -2.6" transform="translate(0.6 1.4)"/></g><path d="M1169 566.8 L1181.6 578.8" stroke="#3a424d" stroke-width="4.2" stroke-linecap="round"/><path d="M1170.6 568.3 l2.2 2.1" stroke="#e6e6e6" stroke-width="1.2"/><path d="M1164.6 558.8000000000001 Q1165.664 561.5360000000001 1168.3999999999999 562.6 Q1165.664 563.664 1164.6 566.4 Q1163.5359999999998 563.664 1160.8 562.6 Q1163.5359999999998 561.5360000000001 1164.6 558.8000000000001 z" fill="#3a424d"/><path d="M1174 558.8 Q1174.728 560.672 1176.6 561.4 Q1174.728 562.1279999999999 1174 564.0 Q1173.272 562.1279999999999 1171.4 561.4 Q1173.272 560.672 1174 558.8 z" fill="#3a424d"/><path d="M1179.6 565.0 Q1180.328 566.8720000000001 1182.1999999999998 567.6 Q1180.328 568.328 1179.6 570.2 Q1178.8719999999998 568.328 1177.0 567.6 Q1178.8719999999998 566.8720000000001 1179.6 565.0 z" fill="#3a424d"/><path d="M1166 570.4 Q1166.672 572.1279999999999 1168.4 572.8 Q1166.672 573.472 1166 575.1999999999999 Q1165.328 573.472 1163.6 572.8 Q1165.328 572.1279999999999 1166 570.4 z" fill="#3a424d"/></svg></div>
<div id="toolbar" class="r" style="left:0px;top:73px;width:1192px;height:41px;"><svg width="1192" height="41" viewBox="0 73 1192 41"><rect x="0" y="73" width="1192" height="41" fill="#efefef"/><rect x="0" y="113" width="1192" height="1" fill="#b3b3b3"/><rect x="272" y="73" width="1" height="41" fill="#b8b8b8"/><rect x="352" y="73" width="1" height="40" fill="#cfcfcf"/><rect x="778" y="73" width="1" height="40" fill="#cfcfcf"/><path d="M19.69 83.21 L22.51 83.21 L22.57 85.97 L24.39 86.73 L26.39 84.82 L28.38 86.81 L26.47 88.81 L27.23 90.63 L29.99 90.69 L29.99 93.51 L27.23 93.57 L26.47 95.39 L28.38 97.39 L26.39 99.38 L24.39 97.47 L22.57 98.23 L22.51 100.99 L19.69 100.99 L19.63 98.23 L17.81 97.47 L15.81 99.38 L13.82 97.39 L15.73 95.39 L14.97 93.57 L12.21 93.51 L12.21 90.69 L14.97 90.63 L15.73 88.81 L13.82 86.81 L15.81 84.82 L17.81 86.73 L19.63 85.97Z M18.0 92.1 a3.1 3.1 0 1 0 6.2 0 a3.1 3.1 0 1 0 -6.2 0Z" fill="#3a424d" fill-rule="evenodd" stroke="#3a424d" stroke-width="0.8" stroke-linejoin="round"/><text x="37.6" y="97.9" font-size="13" fill="#3a424d" stroke="#3a424d" stroke-width="0.55" textLength="43.4" lengthAdjust="spacing">Shapes</text><rect x="210.4" y="84.4" width="16.4" height="16.6" rx="1.8" fill="#fff" stroke="#3a424d" stroke-width="2.2"/><circle cx="215.4" cy="89.5" r="1.9" fill="#3a424d"/><path d="M211 100.4 v-3.2 l4.6 -4.4 l2.8 2.6 l3.6 -4.6 l4.2 4.8 v4.8 z" fill="#3a424d"/><circle cx="248.3" cy="90.4" r="6.2" fill="none" stroke="#3a424d" stroke-width="1.9"/><path d="M253.4 95.6 l6.4 6" stroke="#3a424d" stroke-width="2.8" stroke-linecap="round"/><path d="M0 5.6 L7 0 V3.6 Q15.6 3.8 17.6 12 Q13.6 7.6 7 7.8 V11.4 Z" transform="translate(290.6 86.8)" fill="#3a424d"/><path d="M0 5.6 L7 0 V3.6 Q15.6 3.8 17.6 12 Q13.6 7.6 7 7.8 V11.4 Z" transform="translate(339.4 86.8) scale(-1 1)" fill="#bfc3c8"/><rect x="364.5" y="82.5" width="153" height="21" rx="3" fill="#fff" stroke="#b9b9b9"/><text x="368.6" y="97.5" font-size="14" fill="#666" textLength="96" lengthAdjust="spacing">Liberation Sans</text><path d="M500.2 90.4 h8.2 l-4.1 5.4 z" fill="#7d838c"/><rect x="523.5" y="82.5" width="61" height="21" rx="3" fill="#fff" stroke="#b9b9b9"/><text x="538" y="97.5" font-size="10.5" fill="#444">8</text><text x="546.6" y="97.5" font-size="14" fill="#444" textLength="12.2" lengthAdjust="spacing">pt</text><path d="M567.4 90.4 h8.2 l-4.1 5.4 z" fill="#7d838c"/><g transform="translate(594.2 99.5) scale(0.9 1)"><text x="0" y="0" font-size="17.6" fill="#3a424d" stroke="#3a424d" stroke-width="0.5" font-weight="700">B</text></g><path d="M629.2 87.4 h7.4 M627 98.8 h7.4 M634.1 87.4 l-4.3 11.4" stroke="#3a424d" stroke-width="2" fill="none"/><path d="M659.1 86.3 v7 q0 4.4 3.8 4.4 q3.8 0 3.8 -4.4 v-7" stroke="#3a424d" stroke-width="1.9" fill="none"/><rect x="658.1" y="100.2" width="9.6" height="1.8" fill="#3a424d"/><path d="M689 98.7 l4.3 -12.6 h1.5 l4.3 12.6 M690.6 94.6 h7" stroke="#3a424d" stroke-width="1.9" fill="none" stroke-linejoin="round"/><rect x="684.9" y="103" width="18.2" height="4" fill="#000"/><rect x="717.1" y="85.89999999999999" width="15.899999999999977" height="1.8" fill="#3a424d"/><rect x="719" y="89.89999999999999" width="12" height="1.8" fill="#3a424d"/><rect x="717.1" y="93.8" width="15.899999999999977" height="1.8" fill="#3a424d"/><rect x="719" y="97.8" width="12" height="1.8" fill="#3a424d"/><path d="M749.1 90 v-3 h10.2 v3 M754.2 87 v11.8 M750.6 98.9 h7.2" stroke="#3a424d" stroke-width="1.9" fill="none"/><path d="M759.3 93.4 h4.8 l-2.4 2.7 z" fill="#3a424d"/><rect x="793.9" y="85.9" width="14.3" height="14.2" fill="none" stroke="#3a424d" stroke-width="2"/><rect x="791.9" y="83.9" width="4" height="4" rx="0.8" fill="#3a424d"/><rect x="806.2" y="83.9" width="4" height="4" rx="0.8" fill="#3a424d"/><rect x="791.9" y="98.1" width="4" height="4" rx="0.8" fill="#3a424d"/><rect x="806.2" y="98.1" width="4" height="4" rx="0.8" fill="#3a424d"/><path d="M829.6 86.2 l8.6 8.6 l-6.4 6.4 q-1 1 -2 0 l-6.6 -6.6 q-1 -1 0 -2 z" fill="#3a424d"/><path d="M826 92.6 l3.8 -3.8 l4 4 z" fill="#dfe0e2"/><path d="M828.4 84.4 l10.2 10.2" stroke="#3a424d" stroke-width="1.7" fill="none" stroke-linecap="round"/><path d="M839.4 94.2 q2 2.6 2 3.8 a2 2 0 0 1 -4 0 q0 -1.2 2 -3.8 z" fill="#3a424d"/><rect x="822.8" y="103" width="18.1" height="4" fill="#fff"/><g transform="translate(863.9 92.1) rotate(46)" fill="#3a424d"><rect x="-2" y="-6.3" width="4" height="12.4"/><path d="M-2 6.4 h4 l-2 3.4 z"/><path d="M-2 -7.2 v-1.6 q0 -1 1 -1 h2 q1 0 1 1 v1.6 z"/></g><rect x="861.4" y="99" width="10.6" height="1" fill="#b9b9b9"/><rect x="855" y="103" width="18" height="4" fill="#6a6a6a"/><path d="M893.4 88.5 h-7.4 q-1.2 0 -1.2 1.2 v10 q0 1.2 1.2 1.2 h12.6 q1.2 0 1.2 -1.2 v-3.6" fill="none" stroke="#3a424d" stroke-width="2"/><path d="M888 92.5 h5 M888 95.5 h8.2" stroke="#3a424d" stroke-width="1.7"/><circle cx="900.1" cy="88.9" r="6.6" fill="#efefef"/><circle cx="900.1" cy="88.9" r="5.7" fill="#3a424d"/><path d="M897.4 89 l2 2 l3.6 -4" stroke="#fff" stroke-width="1.6" fill="none"/><rect x="915.5" y="82.5" width="111" height="21" rx="3" fill="#fff" stroke="#b9b9b9"/><rect x="974" y="82.5" width="1" height="21" fill="#b9b9b9"/><rect x="925.6" y="92" width="30.6" height="1.7" fill="#3a424d"/><path d="M962.6 90.4 h8.2 l-4.1 5.4 z" fill="#7d838c"/><text x="981" y="98.2" font-size="13.4" fill="#444">1</text><text x="990.6" y="98.2" font-size="13.4" fill="#444" textLength="13" lengthAdjust="spacing">px</text><path d="M1016.2 90.8 h5.4 l-2.7 -4 z M1016.2 95.4 h5.4 l-2.7 4 z" fill="#7d838c"/><path d="M1037 85.2 h5.8 q1.7 0 1.7 1.7 v8.2 q0 1.7 1.7 1.7 h6" fill="none" stroke="#3a424d" stroke-width="2.3"/><path d="M1051.4 92.4 l5.8 4.4 l-5.8 4.4 z" fill="#3a424d"/><circle cx="1079" cy="88.1" r="2.2" fill="#3a424d"/><circle cx="1084.7" cy="88.1" r="2.2" fill="#3a424d"/><circle cx="1090.4" cy="88.1" r="2.2" fill="#3a424d"/><text x="1071.2" y="106.9" font-size="9.4" fill="#4a515b" stroke="#4a515b" stroke-width="0.25" textLength="26.4" lengthAdjust="spacing">MORE</text><g transform="translate(1151.6 84.2) scale(1 1)"><path d="M0 0 h6.4 l-2.2 2.2 l3.4 3.4 l-2 2 l-3.4 -3.4 l-2.2 2.2 z" fill="#3a424d"/></g><g transform="translate(1169.8 84.2) scale(-1 1)"><path d="M0 0 h6.4 l-2.2 2.2 l3.4 3.4 l-2 2 l-3.4 -3.4 l-2.2 2.2 z" fill="#3a424d"/></g><g transform="translate(1151.6 101.4) scale(1 -1)"><path d="M0 0 h6.4 l-2.2 2.2 l3.4 3.4 l-2 2 l-3.4 -3.4 l-2.2 2.2 z" fill="#3a424d"/></g><g transform="translate(1169.8 101.4) scale(-1 -1)"><path d="M0 0 h6.4 l-2.2 2.2 l3.4 3.4 l-2 2 l-3.4 -3.4 l-2.2 2.2 z" fill="#3a424d"/></g></svg></div>
<div id="menubar" class="r" style="left:0px;top:32px;width:1192px;height:41px;"><svg width="1192" height="41" viewBox="0 32 1192 41"><rect x="0" y="32" width="1192" height="41" fill="#fff"/><rect x="0" y="72" width="1192" height="1" fill="#c2c2c2"/><text x="20.6" y="57.1" font-size="13" fill="#555" stroke="#555" stroke-width="0.2" textLength="20.3" lengthAdjust="spacing">File</text><text x="61.3" y="57.1" font-size="13" fill="#555" stroke="#555" stroke-width="0.2" textLength="22.7" lengthAdjust="spacing">Edit</text><text x="104.3" y="57.1" font-size="13" fill="#555" stroke="#555" stroke-width="0.2" textLength="36.2" lengthAdjust="spacing">Select</text><text x="160.1" y="57.1" font-size="13" fill="#555" stroke="#555" stroke-width="0.2" textLength="27.4" lengthAdjust="spacing">View</text><text x="208.5" y="57.1" font-size="13" fill="#555" stroke="#555" stroke-width="0.2" textLength="32.8" lengthAdjust="spacing">Insert</text><text x="262" y="57.1" font-size="13" fill="#555" stroke="#555" stroke-width="0.2" textLength="44.8" lengthAdjust="spacing">Arrange</text><text x="327.4" y="57.1" font-size="13" fill="#555" stroke="#555" stroke-width="0.2" textLength="33" lengthAdjust="spacing">Share</text><text x="381.5" y="57.1" font-size="13" fill="#555" stroke="#555" stroke-width="0.2" textLength="26.8" lengthAdjust="spacing">Help</text><text x="432" y="57.1" font-size="13" fill="#4a90ee" stroke="#4a90ee" stroke-width="0.2" textLength="68.4" lengthAdjust="spacing">What's New</text><rect x="432" y="58.2" width="68.4" height="1" fill="#4a90ee"/><text x="520.3" y="57.1" font-size="13" fill="#80858c" stroke="#80858c" stroke-width="0.2" textLength="35.6" lengthAdjust="spacing">Saved</text><g fill="#505050"><circle cx="898.4" cy="54.6" r="4.5"/><circle cx="908.9" cy="54.6" r="4.5"/><path d="M895.4 51 l1.3 -4.6 h3.4 l0.8 3 h5.5 l0.8 -3 h3.4 l1.3 4.6 z"/><rect x="901.6" y="50" width="4.1" height="4.6"/></g><circle cx="898.4" cy="54.6" r="2.1" fill="#fff"/><circle cx="908.9" cy="54.6" r="2.1" fill="#fff"/><text x="920.6" y="57.1" font-size="13" fill="#555" stroke="#555" stroke-width="0.2" textLength="72.6" lengthAdjust="spacing">Feature Find</text><rect x="1010" y="38" width="80.5" height="28" rx="4" fill="#7b838f"/><path d="M1022.6 47 l6.8 4.4 l-6.8 4.4 z" fill="#fff"/><text x="1033.4" y="57.2" font-size="13" fill="#fff" stroke="#fff" stroke-width="0.3" textLength="44" lengthAdjust="spacing">Present</text><rect x="1101" y="38" width="80.5" height="28" rx="4" fill="#f0913f"/><g fill="#fff"><circle cx="1119.2" cy="47.8" r="2.6"/><path d="M1113.6 56.6 v-2.2 q0 -3 5.6 -3 q1.6 0 2.6 0.3 q-1.6 1 -1.6 3 v1.9 z"/><circle cx="1126" cy="47.2" r="3"/><path d="M1120.2 56.6 v-2 q0 -3.4 5.8 -3.4 q5.8 0 5.8 3.4 v2 z"/></g><text x="1135.6" y="57.2" font-size="13" fill="#fff" stroke="#fff" stroke-width="0.5" textLength="33.4" lengthAdjust="spacing">Share</text></svg></div>
<div id="topbar" class="r" style="left:0px;top:0px;width:1192px;height:32px;"><svg width="1192" height="32" viewBox="0 0 1192 32"><rect x="0" y="0" width="1192" height="32" fill="#3d4651"/><rect x="0" y="0" width="1192" height="1" fill="#4f5863"/><rect x="0" y="0" width="40" height="32" fill="#ef9240"/><path d="M10 9.2 q0 -1 1 -1 h7.6 q0.8 0 1.2 0.7 l1.3 2.1 h8 q1 0 1 1 v11 q0 1 -1 1 h-18.1 q-1 0 -1 -1 z" fill="#fff"/><text x="50.6" y="21.2" font-size="13" fill="#fff" stroke="#fff" stroke-width="0.5" textLength="199" lengthAdjust="spacing">Entity Relationship Diagram Exa…</text><g transform="translate(269.6 16.6) rotate(45)" fill="#fff"><rect x="-1.7" y="-6.2" width="3.4" height="11.2"/><path d="M-1.7 5.6 h3.4 l-1.7 3 z"/><path d="M-1.7 -7 v-1.4 q0 -0.9 0.9 -0.9 h1.6 q0.9 0 0.9 0.9 v1.4 z"/></g><text x="1094.8" y="21.2" font-size="13" fill="#fff" stroke="#fff" stroke-width="0.5" textLength="73.6" lengthAdjust="spacing">James Webb</text><path d="M1173.8 13 h8.4 l-4.2 6 z" fill="#fff"/></svg></div>
<div id="bottombar" class="r" style="left:0px;top:779px;width:1192px;height:32px;"><svg width="1192" height="32" viewBox="0 779 1192 32"><rect x="0" y="779" width="1192" height="32" fill="#79818d"/><rect x="103.2" y="786.6" width="3.2" height="3.2" rx="1" fill="#fff"/><rect x="108.6" y="786.7" width="14.6" height="3" rx="1" fill="#fff"/><rect x="103.2" y="793.1999999999999" width="3.2" height="3.2" rx="1" fill="#fff"/><rect x="108.6" y="793.3" width="14.6" height="3" rx="1" fill="#fff"/><rect x="103.2" y="799.8" width="3.2" height="3.2" rx="1" fill="#fff"/><rect x="108.6" y="799.9" width="14.6" height="3" rx="1" fill="#fff"/><rect x="141" y="786.4" width="8.4" height="8.2" rx="1" fill="#fff"/><rect x="150.8" y="786.4" width="8.4" height="8.2" rx="1" fill="#fff"/><rect x="141" y="796.2" width="8.4" height="8.2" rx="1" fill="#fff"/><rect x="150.8" y="796.2" width="8.4" height="8.2" rx="1" fill="#fff"/><path d="M173.4 779 h182.6 v23.8 q0 4 -4 4 h-174.6 q-4 0 -4 -4 z" fill="#3d4651"/><text x="183.2" y="797.3" font-size="13.2" fill="#fff" stroke="#fff" stroke-width="0.5" textLength="145.4" lengthAdjust="spacing">Entity Relationship Dia…</text><path d="M338.2 790.2 h8.4 l-4.2 5 z" fill="#fff"/><circle cx="379" cy="794.4" r="8" fill="none" stroke="#fff" stroke-width="2"/><path d="M374.6 794.4 h8.8 M379 790 v8.8" stroke="#fff" stroke-width="2"/><rect x="895" y="784" width="1.4" height="23" fill="#4c545f"/><circle cx="916.8" cy="794.8" r="8" fill="none" stroke="#fff" stroke-width="2"/><path d="M916.8 789.6 l3.6 8.6 l-3.6 -1.8 l-3.6 1.8 z" fill="#fff"/><rect x="941.8" y="793.8" width="14.4" height="2" fill="#fff"/><rect x="968.4" y="793" width="138.4" height="3.8" rx="1.9" fill="#a9aeb5"/><circle cx="1024" cy="794.9" r="6" fill="#4f94f0"/><path d="M1118.6 794.8 h14 M1125.6 787.8 v14" stroke="#fff" stroke-width="2"/><text x="1140.2" y="799.7" font-size="13.2" fill="#fff" stroke="#fff" stroke-width="0.5" textLength="26.2" lengthAdjust="spacing">75%</text><path d="M1172.2 792.2 h7.8 l-3.9 5 z" fill="#fff"/></svg></div>
</body></html>
